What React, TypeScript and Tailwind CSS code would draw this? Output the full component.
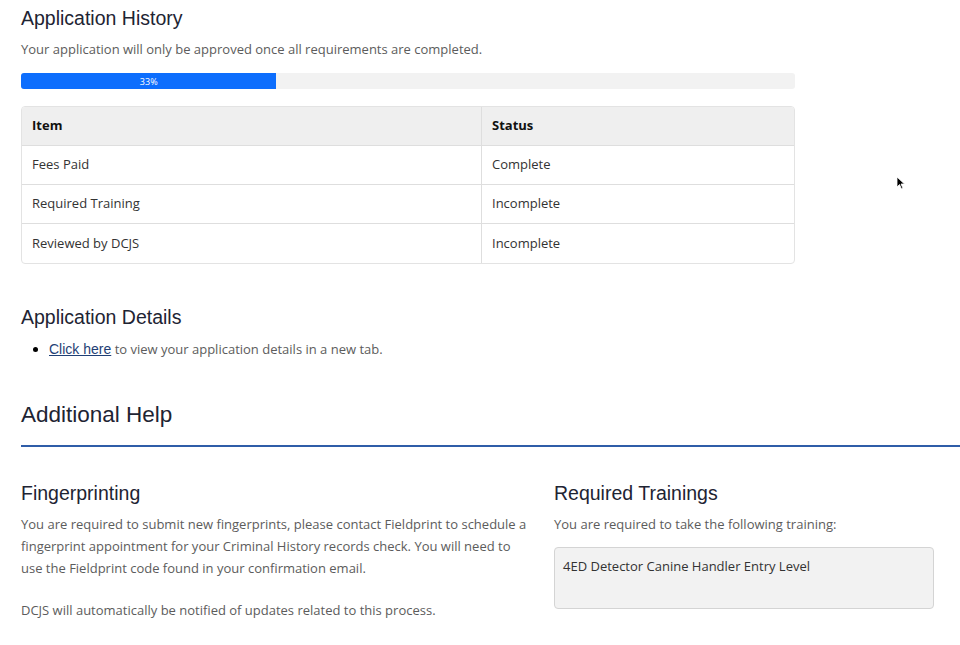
export default function App() {
	const rows = [
		{ item: 'Fees Paid', status: 'Complete' },
		{ item: 'Required Training', status: 'Incomplete' },
		{ item: 'Reviewed by DCJS', status: 'Incomplete' },
	];
	const progress = 33;

	return (
		<div className="relative w-[960px] h-[645px] overflow-hidden bg-white pl-[21px] font-['Open_Sans',sans-serif] text-[13px] text-[#5c5c5c]">
			{/* Application History */}
			<div className="w-[774px]">
				<h2 className="pt-[6px] font-['Liberation_Sans',Arial,sans-serif] text-[19.5px] leading-[24px] text-[#1e2433]">
					Application History
				</h2>
				<p className="mt-[10px] leading-[18px]">
					Your application will only be approved once all requirements are completed.
				</p>
				<div className="mt-[15px] h-[16px] w-full rounded-[3px] bg-[#f2f2f2] overflow-hidden flex">
					<div
						className="h-full bg-[#0d6efd] flex items-center justify-center text-[9px] leading-none text-white"
						style={{ width: `${progress}%` }}
					>
						{progress}%
					</div>
				</div>

				<div className="mt-[17px] rounded-[4px] border border-[#e3e3e3] overflow-hidden">
					<div className="grid grid-cols-[459px_1fr] bg-[#efefef] h-[39px] border-b border-[#dedede]">
						<div className="flex items-center px-[10px] font-bold text-[#111]">Item</div>
						<div className="flex items-center px-[10px] font-bold text-[#111] border-l border-[#dedede]">Status</div>
					</div>
					{rows.map((r, i) => (
						<div
							key={r.item}
							className={`grid grid-cols-[459px_1fr] h-[39px] ${i < rows.length - 1 ? 'border-b border-[#dedede]' : ''}`}
						>
							<div className="flex items-center px-[10px] text-[#333]">{r.item}</div>
							<div className="flex items-center px-[10px] text-[#333] border-l border-[#dedede]">{r.status}</div>
						</div>
					))}
				</div>
			</div>

			{/* Application Details */}
			<h2 className="mt-[41px] font-['Liberation_Sans',Arial,sans-serif] text-[19.5px] leading-[24px] text-[#1e2433]">
				Application Details
			</h2>
			<ul className="mt-[11px] list-disc pl-[28px] leading-[18px]">
				<li className="marker:text-black">
					<a href="#" className="underline text-[#1f3f75] font-['Liberation_Sans',Arial,sans-serif] text-[14px]">
						Click here
					</a>{' '}
					to view your application details in a new tab.
				</li>
			</ul>

			{/* Additional Help */}
			<h2 className="mt-[43px] font-['Liberation_Sans',Arial,sans-serif] text-[22.5px] leading-[28px] text-[#1e2433]">
				Additional Help
			</h2>
			<div className="mt-[16px] h-[2px] bg-[#2f5da8]" />

			<div className="mt-[34px] flex">
				<div className="w-[533px] pr-[20px]">
					<h3 className="font-['Liberation_Sans',Arial,sans-serif] text-[19.5px] leading-[24px] text-[#1e2433]">
						Fingerprinting
					</h3>
					<p className="mt-[8px] leading-[22px]">
						You are required to submit new fingerprints, please contact Fieldprint to schedule a fingerprint
						appointment for your Criminal History records check. You will need to use the Fieldprint code found
						in your confirmation email.
					</p>
					<p className="mt-[20px] leading-[22px]">DCJS will automatically be notified of updates related to this process.</p>
				</div>
				<div className="w-[380px]">
					<h3 className="font-['Liberation_Sans',Arial,sans-serif] text-[19.5px] leading-[24px] text-[#1e2433]">
						Required Trainings
					</h3>
					<p className="mt-[8px] leading-[22px]">You are required to take the following training:</p>
					<div className="mt-[12px] h-[62px] rounded-[4px] border border-[#d4d4d4] bg-[#f2f2f2] px-[8px] pt-[9px] text-[#333]">
						4ED Detector Canine Handler Entry Level
					</div>
				</div>
			</div>

			{/* mouse cursor */}
			<svg className="absolute left-[896px] top-[176px]" width="10" height="14" viewBox="0 0 10 14">
				<path d="M1 1 L1 11 L3.5 8.5 L5.5 13 L7 12.3 L5 8 L8.5 8 Z" fill="#000" stroke="#fff" strokeWidth="0.8" />
			</svg>
		</div>
	);
}
